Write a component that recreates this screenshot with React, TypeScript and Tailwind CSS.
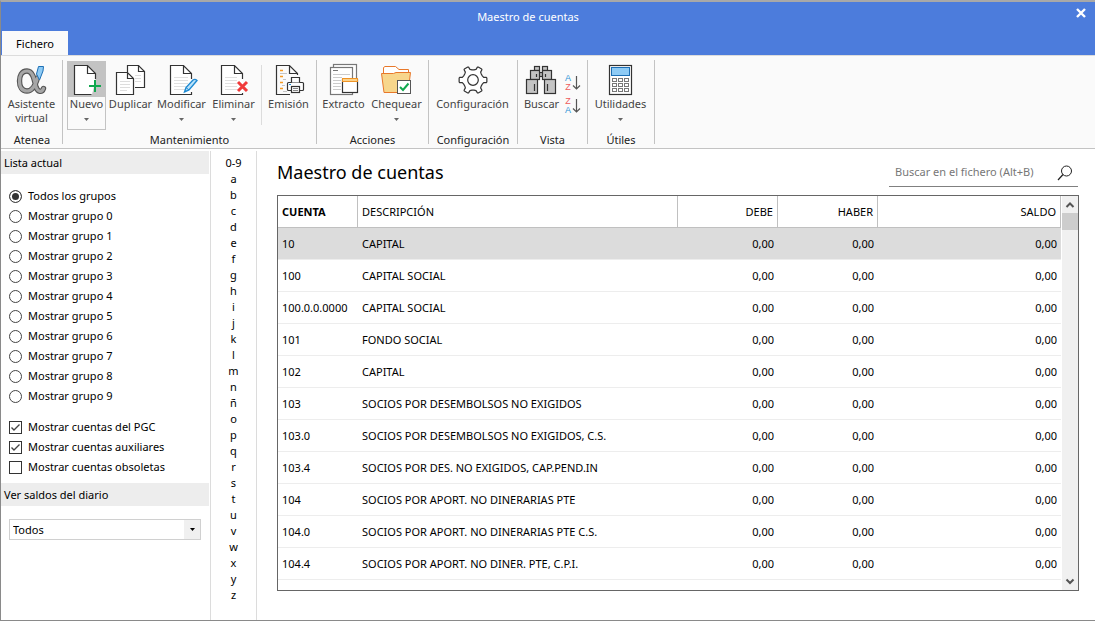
import type { ReactNode } from "react";
import { useState } from "react";

const sheetLines = [16, 19, 22, 25, 28];

function Icon({ children }: { children: ReactNode }) {
  return (
    <svg width="37" height="36" viewBox="0 0 37 36" fill="none" stroke="#333" className="block shrink-0" aria-hidden="true">
      {children}
    </svg>
  );
}

function AlphaIcon() {
  const d = "M30.500 27.500C29 31.500 25 31.500 23 26C21 17 19.500 10 14 10C8.500 10 6.500 15 6.500 20C6.500 26 9 30 14 30C19 30 22.500 24 24.500 17";
  return (
    <Icon>
      <path d={d} stroke="#555" strokeWidth="5.400" strokeLinecap="round" />
      <path d={d} stroke="#a6a6a6" strokeWidth="3.200" strokeLinecap="round" />
      <path d="M25.500 5.500H30.500L30 10L26.500 19L23.500 13Z" fill="#8ecbf5" stroke="#1c6fb5" />
    </Icon>
  );
}

function NewIcon() {
  return (
    <Icon>
      <path d="M19.500 4.500H6.500V33.500H24L27.500 20V12.500Z" fill="#fff" stroke="none" />
      <path d="M23.500 33.500H6.500V4.500H19.500L27.500 12.500V18M19.500 4.500V12.500H27.500" strokeWidth="1.200" />
      <path d="M27 19V31M21 25H33" stroke="#12a84f" strokeWidth="2" />
    </Icon>
  );
}

function CopyIcon() {
  return (
    <Icon>
      <path d="M15.500 11V4.500H26.500L32.500 10.500V26.500H23" fill="#fff" strokeWidth="1.200" />
      <path d="M26.500 4.500V10.500H32.500" strokeWidth="1.200" />
      <path d="M23 14.500H29M23 17.500H29M23 20.500H29" stroke="#ddd" />
      <path d="M15.500 11.500H4.500V33.500H21.500V17.500ZM15.500 11.500V17.500H21.500" fill="#fff" strokeWidth="1.200" />
      <path d="M8 20.500H18M8 23.500H18M8 26.500H18M8 29.500H15" stroke="#ddd" />
    </Icon>
  );
}

function EditIcon() {
  return (
    <Icon>
      <path d="M7.500 4.500H20.500L28.500 12.500V33.500H7.500Z" fill="#fff" stroke="none" />
      <path d="M28.500 31V33.500H7.500V4.500H20.500L28.500 12.500V18M20.500 4.500V12.500H28.500" strokeWidth="1.200" />
      {sheetLines.map((y) => (
        <path key={y} d={`M11 ${y + 0.5}H25`} stroke="#e0e0e0" />
      ))}
      <path d="M21.500 31L23 26.500L30 19Q32 17.500 34 19.500L26 29Z" fill="#b9e2fa" stroke="#1f8ad2" strokeWidth="1.400" />
      <path d="M23 26.500L26 29" stroke="#1f8ad2" />
    </Icon>
  );
}

function DeleteIcon() {
  return (
    <Icon>
      <path d="M6.500 4.500H19.500L27.500 12.500V33.500H6.500Z" fill="#fff" stroke="none" />
      <path d="M27.500 32V33.500H6.500V4.500H19.500L27.500 12.500V18M19.500 4.500V12.500H27.500" strokeWidth="1.200" />
      {sheetLines.map((y) => (
        <path key={y} d={`M10 ${y + 0.5}H22`} stroke="#e0e0e0" />
      ))}
      <path d="M23 21L32 30M32 21L23 30" stroke="#f03a3a" strokeWidth="3" />
    </Icon>
  );
}

function PrintIcon() {
  return (
    <Icon>
      <path d="M20 33.500H6.500V4.500H19.500L27.500 12.500V14M19.500 4.500V12.500H27.500" strokeWidth="1.200" />
      <path d="M10 9.500H13M10 15.500H13M10 21.500H13M10 27.500H13" stroke="#f59a23" strokeWidth="1.500" />
      <path d="M10 12.500H17M13 18.500H16M12 24.500H15M13 30.500H17" stroke="#c4c4c4" />
      <rect x="17.500" y="21.500" width="16" height="8" rx="1" fill="#fff" strokeWidth="1.200" />
      <path d="M21.500 21.500V16.500H29.500V21.500" fill="#fff" strokeWidth="1.200" />
      <rect x="21.500" y="25.500" width="8" height="6" fill="#fff" strokeWidth="1.200" />
      <path d="M23 27.500H28M23 29.500H28" stroke="#888" />
      <path d="M19 23.500H21" stroke="#1f8ad2" />
    </Icon>
  );
}

function ReportIcon() {
  return (
    <Icon>
      <rect x="8.500" y="3.500" width="23" height="27" fill="#fff" stroke="#777" strokeWidth="1.200" />
      <rect x="5.500" y="6.500" width="22" height="27" fill="#fff" stroke="#777" strokeWidth="1.200" />
      <path d="M8 9.500H13" stroke="#777" />
      <path d="M8 13.500H25M8 16.500H17M8 19.500H16M8 22.500H16M8 25.500H16M8 28.500H16" stroke="#ccc" />
      <rect x="17.500" y="18.500" width="15" height="13" fill="#fff" strokeWidth="1.200" />
      <rect x="17.500" y="17.500" width="15" height="3" fill="#fbd28b" stroke="#ef9426" />
    </Icon>
  );
}

function FolderCheckIcon() {
  return (
    <Icon>
      <path d="M5.500 14V6.500L7 5.500H17.500L21 8.500H30.500V14" fill="#fff" stroke="#e8782a" />
      <path d="M3.500 12.500H15.500L18 11.500H32.500L30 31.500H6Z" fill="#f7d68c" stroke="#e8782a" />
      <rect x="19.500" y="19.500" width="13" height="13" fill="#fff" stroke="#555" />
      <path d="M22 26L25 29L30.500 22.500" stroke="#12a84f" strokeWidth="2" />
    </Icon>
  );
}

const gearPoints = [0, 60, 120, 180, 240, 300]
  .flatMap((base) => [
    [base - 24, 10.2],
    [base - 14, 11],
    [base - 11, 13.6],
    [base - 8, 14],
    [base + 8, 14],
    [base + 11, 13.6],
    [base + 14, 11],
    [base + 24, 10.2],
  ])
  .map(([deg, r]) => {
    const a = (deg * Math.PI) / 180;
    return `${(19 + r * Math.cos(a)).toFixed(2)},${(19 + r * Math.sin(a)).toFixed(2)}`;
  })
  .join(" ");

function GearIcon() {
  return (
    <Icon>
      <polygon points={gearPoints} fill="#fff" strokeWidth="1.200" strokeLinejoin="round" />
      <circle cx="19" cy="19" r="5.300" strokeWidth="1.200" />
    </Icon>
  );
}

function BinocularsIcon() {
  return (
    <Icon>
      <g fill="#c4c4c4" strokeWidth="1.200">
        <rect x="11.500" y="5.500" width="5" height="4" />
        <rect x="19.500" y="5.500" width="5" height="4" />
        <rect x="16.500" y="11.500" width="3" height="4" />
        <rect x="7.500" y="9.500" width="9" height="9" />
        <rect x="19.500" y="9.500" width="9" height="9" />
        <rect x="3.500" y="18.500" width="11" height="14" />
        <rect x="21.500" y="18.500" width="11" height="14" />
        <path d="M11.500 23V30M24.500 23V30M13.500 13V16M22.500 13V16" />
      </g>
    </Icon>
  );
}

function CalculatorIcon() {
  return (
    <Icon>
      <rect x="7.500" y="4.500" width="22" height="29" fill="#fff" strokeWidth="1.200" />
      <rect x="9.500" y="6.500" width="18" height="8" fill="#8ecbf5" stroke="#1c6fb5" />
      {[17.5, 22.5, 27.5].map((y) =>
        [10.5, 16.5, 22.5].map((x) => <rect key={`${x}-${y}`} x={x} y={y} width="4" height="3" stroke="#777" />),
      )}
    </Icon>
  );
}

function Caret() {
  return (
    <svg width="5" height="3" viewBox="0 0 5 3" className="mt-[7px] block" aria-hidden="true">
      <path d="M0 0H5L2.500 3Z" fill="#666" />
    </svg>
  );
}

type RibbonButtonProps = { icon: ReactNode; label: string; width: string; menu?: boolean; active?: boolean };

function RibbonButton({ icon, label, width, menu, active }: RibbonButtonProps) {
  return (
    <button
      type="button"
      className={`flex h-[69px] shrink-0 flex-col items-center ${width} ${active ? "shadow-[inset_0_0_0_1px_#c3c3c3]" : ""}`}
    >
      <span className={`flex w-full justify-center ${active ? "bg-[#c3c3c3]" : ""}`}>{icon}</span>
      <span className="text-center leading-[14px] text-[#444]">{label}</span>
      {menu && <Caret />}
    </button>
  );
}

function RibbonGroup({ title, width, children }: { title: string; width: string; children: ReactNode }) {
  return (
    <section className={`flex shrink-0 flex-col justify-between border-r border-[#c3c3c3] pt-px ${width}`}>
      <div className="flex">{children}</div>
      <h2 className="text-center leading-[8px] text-[#222]">{title}</h2>
    </section>
  );
}

function SortButton({ letters, label }: { letters: [string, string]; label: string }) {
  return (
    <button type="button" aria-label={label} className="flex items-center gap-px">
      <span className="flex flex-col font-['Liberation_Sans',sans-serif] text-[9px] leading-[9px]">
        {letters.map((l) => (
          <span key={l} className={l === "A" ? "text-[#2b93d6]" : "text-[#ee5a5a]"}>
            {l}
          </span>
        ))}
      </span>
      <svg width="9" height="16" viewBox="0 0 9 16" fill="none" stroke="#555" aria-hidden="true">
        <path d="M4.500 1V14M1 10.500L4.500 14L8 10.500" strokeWidth="1.200" />
      </svg>
    </button>
  );
}

function PanelTitle({ children }: { children: ReactNode }) {
  return <h2 className="h-[23px] bg-[#ededed] px-[3px] leading-[23px]">{children}</h2>;
}

const groups = ["Todos los grupos", ...Array.from({ length: 10 }, (_, i) => `Mostrar grupo ${i}`)];
const filters = ["Mostrar cuentas del PGC", "Mostrar cuentas auxiliares", "Mostrar cuentas obsoletas"];
const letters = ["0-9", ..."abcdefghijklmnñopqrstuvwxyz"];

const accounts: [string, string][] = [
  ["10", "CAPITAL"],
  ["100", "CAPITAL SOCIAL"],
  ["100.0.0.0000", "CAPITAL SOCIAL"],
  ["101", "FONDO SOCIAL"],
  ["102", "CAPITAL"],
  ["103", "SOCIOS POR DESEMBOLSOS NO EXIGIDOS"],
  ["103.0", "SOCIOS POR DESEMBOLSOS NO EXIGIDOS, C.S."],
  ["103.4", "SOCIOS POR DES. NO EXIGIDOS, CAP.PEND.IN"],
  ["104", "SOCIOS POR APORT. NO DINERARIAS PTE"],
  ["104.0", "SOCIOS POR APORT. NO DINERARIAS PTE C.S."],
  ["104.4", "SOCIOS POR APORT. NO DINER. PTE, C.P.I."],
];

export default function App() {
  const [group, setGroup] = useState(0);
  const [checked, setChecked] = useState([true, true, false]);

  return (
    <div className="flex min-h-screen flex-col border-t-2 border-b border-l border-[#8a8a8a] border-t-[#a8a8a8] bg-white font-['Noto_Sans','Open_Sans',sans-serif] text-[11px] text-black">
      <header className="flex h-[53px] flex-col justify-between bg-[#4c7cdc]">
        <div className="flex items-start">
          <h1 className="flex-1 pt-[7px] text-center leading-4 text-white">Maestro de cuentas</h1>
          <button type="button" aria-label="Cerrar" className="flex w-10 justify-center pt-[6px] pl-4">
            <svg width="10" height="10" viewBox="0 0 10 10" className="mr-1" aria-hidden="true">
              <path d="M1 1L9 9M9 1L1 9" stroke="#fff" strokeWidth="2.400" />
            </svg>
          </button>
        </div>
        <nav className="flex pl-px">
          <button type="button" className="h-6 w-[66px] bg-[#fafafa] pt-px leading-6">
            Fichero
          </button>
        </nav>
      </header>

      <div className="flex h-[94px] shrink-0 border-t border-b border-[#c3c3c3] border-t-[#dcdcdc] bg-[#fafafa] py-1 pl-px">
        <RibbonGroup title="Atenea" width="w-[61px]">
          <RibbonButton icon={<AlphaIcon />} label="Asistente virtual" width="w-[59px]" />
        </RibbonGroup>
        <RibbonGroup title="Mantenimiento" width="w-[254px]">
          <div className="flex pl-1">
            <RibbonButton icon={<NewIcon />} label="Nuevo" width="w-[39px]" menu active />
            <RibbonButton icon={<CopyIcon />} label="Duplicar" width="w-[49px]" />
            <RibbonButton icon={<EditIcon />} label="Modificar" width="w-[53px]" menu />
            <RibbonButton icon={<DeleteIcon />} label="Eliminar" width="w-[51px]" menu />
            <div className="mx-[2px] mt-1 h-[60px] w-px bg-[#dcdcdc]" />
            <RibbonButton icon={<PrintIcon />} label="Emisión" width="w-[49px]" />
          </div>
        </RibbonGroup>
        <RibbonGroup title="Acciones" width="w-[112px]">
          <div className="flex pl-[3px]">
            <RibbonButton icon={<ReportIcon />} label="Extracto" width="w-[47px]" />
            <RibbonButton icon={<FolderCheckIcon />} label="Chequear" width="w-[59px]" menu />
          </div>
        </RibbonGroup>
        <RibbonGroup title="Configuración" width="w-[89px]">
          <RibbonButton icon={<GearIcon />} label="Configuración" width="w-[87px]" />
        </RibbonGroup>
        <RibbonGroup title="Vista" width="w-[70px]">
          <div className="flex pl-[3px]">
            <RibbonButton icon={<BinocularsIcon />} label="Buscar" width="w-[41px]" />
            <div className="flex flex-col gap-[5px] pt-[13px] pl-[3px]">
              <SortButton letters={["A", "Z"]} label="Orden ascendente" />
              <SortButton letters={["Z", "A"]} label="Orden descendente" />
            </div>
          </div>
        </RibbonGroup>
        <RibbonGroup title="Útiles" width="w-[67px]">
          <RibbonButton icon={<CalculatorIcon />} label="Utilidades" width="w-[65px]" menu />
        </RibbonGroup>
      </div>

      <div className="flex flex-1 pt-[2px]">
        <aside className="w-[210px] shrink-0 border-r border-[#dcdcdc] pr-px">
          <PanelTitle>Lista actual</PanelTitle>
          <fieldset className="pt-3 pl-2">
            {groups.map((name, i) => (
              <label key={name} className="flex h-5 items-center gap-[6px]">
                <input
                  type="radio"
                  name="grupo"
                  checked={group === i}
                  onChange={() => setGroup(i)}
                  className="size-[13px] appearance-none rounded-full border border-[#444] bg-white checked:bg-[#333] checked:shadow-[inset_0_0_0_2px_#fff]"
                />
                {name}
              </label>
            ))}
          </fieldset>
          <fieldset className="pt-[11px] pb-[6px] pl-2">
            {filters.map((name, i) => (
              <label key={name} className="flex h-5 items-center gap-[6px]">
                <span className="grid">
                  <input
                    type="checkbox"
                    checked={checked[i]}
                    onChange={() => setChecked(checked.map((c, j) => (j === i ? !c : c)))}
                    className="col-start-1 row-start-1 size-[13px] appearance-none border border-[#333] bg-white"
                  />
                  {checked[i] && (
                    <svg width="13" height="13" viewBox="0 0 13 13" className="pointer-events-none col-start-1 row-start-1" aria-hidden="true">
                      <path d="M2.500 6.500L5 9L10.500 3.500" fill="none" stroke="#444" strokeWidth="1.400" />
                    </svg>
                  )}
                </span>
                {name}
              </label>
            ))}
          </fieldset>
          <PanelTitle>Ver saldos del diario</PanelTitle>
          <div className="mt-[13px] mr-2 ml-2 grid h-[21px] grid-cols-[1fr_16px] border border-[#d0d0d0]">
            <select
              aria-label="Ver saldos del diario"
              className="col-span-2 col-start-1 row-start-1 appearance-none bg-transparent pt-px pl-[3px] outline-none"
            >
              <option>Todos</option>
            </select>
            <span className="pointer-events-none col-start-2 row-start-1 flex items-center justify-center bg-[#f0f0f0]">
              <svg width="5" height="3" viewBox="0 0 5 3" aria-hidden="true">
                <path d="M0 0H5L2.500 3Z" fill="#000" />
              </svg>
            </span>
          </div>
        </aside>

        <nav className="flex w-[46px] shrink-0 flex-col items-center border-r border-[#dcdcdc] pt-1" aria-label="Índice alfabético">
          {letters.map((l) => (
            <button key={l} type="button" className="h-4 leading-4">
              {l}
            </button>
          ))}
        </nav>

        <main className="flex flex-1 flex-col pr-4 pb-7 pl-5">
          <div className="flex items-start justify-between">
            <h2 className="h-9 pt-[7px] text-[18px] leading-7">Maestro de cuentas</h2>
            <label className="mt-2 mr-px flex h-7 w-[189px] items-center border-b border-[#808080] pr-[5px] pl-[6px]">
              <input
                type="search"
                aria-label="Buscar"
                placeholder="Buscar en el fichero (Alt+B)"
                className="min-w-0 flex-1 bg-transparent outline-none placeholder:text-[#777]"
              />
              <svg width="16" height="16" viewBox="0 0 16 16" fill="none" stroke="#222" aria-hidden="true">
                <circle cx="9.500" cy="6" r="5" />
                <path d="M6 9.500L1 15" strokeWidth="1.200" />
              </svg>
            </label>
          </div>

          <div className="mt-2 flex h-[396px] overflow-hidden border border-[#666]">
            <div className="flex-1 overflow-hidden">
              <table className="w-full table-fixed border-separate border-spacing-0 text-[11px]">
                <colgroup>
                  <col className="w-20" />
                  <col className="w-80" />
                  <col className="w-[100px]" />
                  <col className="w-[100px]" />
                  <col />
                </colgroup>
                <thead>
                  <tr className="h-8">
                    {["CUENTA", "DESCRIPCIÓN", "DEBE", "HABER", "SALDO"].map((h, i) => (
                      <th
                        key={h}
                        className={`border-r border-b border-[#c0c0c0] px-1 pt-px ${i === 0 ? "font-bold" : "font-normal"} ${i > 1 ? "text-right" : "text-left"}`}
                      >
                        {h}
                      </th>
                    ))}
                  </tr>
                </thead>
                <tbody>
                  {accounts.map(([code, name], i) => (
                    <tr key={code} className={`h-8 ${i === 0 ? "bg-[#dcdcdc]" : ""}`}>
                      <td className="border-b border-[#ededed] px-1 pt-px">{code}</td>
                      <td className="border-b border-[#ededed] px-1 pt-px">{name}</td>
                      <td className="border-b border-[#ededed] px-1 pt-px text-right">0,00</td>
                      <td className="border-b border-[#ededed] px-1 pt-px text-right">0,00</td>
                      <td className="border-b border-[#ededed] px-1 pt-px text-right">0,00</td>
                    </tr>
                  ))}
                </tbody>
              </table>
            </div>
            <div className="ml-px flex w-4 flex-col items-center bg-[#f0f0f0]">
              <svg width="16" height="17" viewBox="0 0 16 17" fill="none" stroke="#555" strokeWidth="2" aria-hidden="true">
                <path d="M4.500 11L8 7.500L11.500 11" />
              </svg>
              <div className="h-[17px] w-full bg-[#cdcdcd]" />
              <svg width="16" height="17" viewBox="0 0 16 17" fill="none" stroke="#555" strokeWidth="2" className="mt-auto" aria-hidden="true">
                <path d="M4.500 6.500L8 10L11.500 6.500" />
              </svg>
            </div>
          </div>
        </main>
      </div>
    </div>
  );
}
